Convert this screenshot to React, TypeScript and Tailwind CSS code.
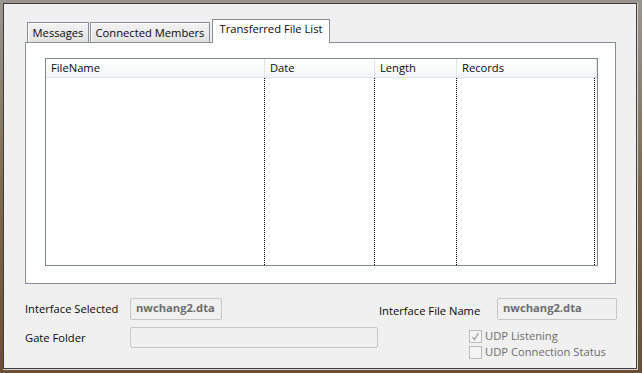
const columns = [
    { name: 'FileName', width: 'w-[219px]' },
    { name: 'Date', width: 'w-[110px]' },
    { name: 'Length', width: 'w-[82px]' },
    { name: 'Records', width: 'w-[139px]' },
];

function Tab({ label, active, width }: { label: string; active?: boolean; width: string }) {
    if (active) {
        return (
            <div
                className={`relative z-10 -mb-px flex h-[24px] ${width} items-start justify-center border border-b-0 border-[#898c95] bg-white pt-[3px]`}
            >
                {label}
            </div>
        );
    }
    return (
        <div
            className={`flex h-[20px] ${width} items-center justify-center border border-b-0 border-[#898c95] bg-gradient-to-b from-[#f3f3f3] to-[#e2e2e2] shadow-[inset_1px_1px_0_#fcfcfc]`}
        >
            {label}
        </div>
    );
}

function Checkbox({ label, checked }: { label: string; checked?: boolean }) {
    return (
        <div className="flex h-[16px] items-center gap-[3px]">
            <div className="flex h-[13px] w-[13px] items-center justify-center border border-[#bcbcbc] bg-[#f4f4f4]">
                {checked && (
                    <svg width="9" height="9" viewBox="0 0 9 9" fill="none">
                        <path d="M1.5 5 L3.5 7.5 L7.5 1" stroke="#a5a5a5" strokeWidth="1.4" />
                    </svg>
                )}
            </div>
            <span className="text-[#6d6d6d]">{label}</span>
        </div>
    );
}

export default function App() {
    return (
        <div
            className="h-[373px] w-[642px] bg-gradient-to-b from-[#9a968f] via-[#7e6a50] to-[#6a4f35] pl-[3px] pt-[3px] text-[11.2px] leading-none text-[#0a0a0a]"
            style={{ fontFamily: '"Open Sans", "Noto Sans", sans-serif' }}
        >
            <div className="h-[367px] w-[635px] border-b border-r border-[#d9d4cc]">
                <div className="h-[366px] w-[634px] border border-[#3d3d3d] bg-[#f0f0f0] pl-[21px] pt-[15px]">
                    {/* Tabs */}
                    <div className="flex items-end pl-[2px]">
                        <Tab label="Messages" width="w-[62px]" />
                        <div className="w-px" />
                        <Tab label="Connected Members" width="w-[120px]" />
                        <div className="w-[2px]" />
                        <Tab label="Transferred File List" width="w-[118px]" active />
                    </div>

                    {/* Tab panel */}
                    <div className="h-[242px] w-[591px] border border-[#898c95] bg-white pl-[19px] pt-[15px]">
                        <div className="flex h-[208px] w-[553px] flex-col border border-[#828790] bg-white">
                            <div className="flex h-[19px] border-b border-[#e3e4e6] bg-gradient-to-b from-white to-[#f5f6f7]">
                                {columns.map((col) => (
                                    <div
                                        key={col.name}
                                        className={`${col.width} flex items-center border-r border-[#e3e4e6] pl-[5px] last:flex-1`}
                                    >
                                        {col.name}
                                    </div>
                                ))}
                            </div>
                            <div className="flex flex-1">
                                {columns.map((col) => (
                                    <div
                                        key={col.name}
                                        className={`${col.width} border-r border-dotted border-black last:flex-none last:w-[138px]`}
                                    />
                                ))}
                            </div>
                        </div>
                    </div>

                    {/* Bottom fields */}
                    <div className="mt-[14px] flex w-[591px] items-center">
                        <div className="w-[105px]">Interface Selected</div>
                        <div className="flex h-[22px] w-[92px] items-center rounded-[2px] border border-[#c6c6c6] pb-[2px] pl-[5px] font-bold text-[#6d6d6d]">
                            nwchang2.dta
                        </div>
                        <div className="ml-auto w-[118px] pt-[3px]">Interface File Name</div>
                        <div className="mr-[-1px] flex h-[22px] w-[120px] items-center rounded-[2px] border border-[#c6c6c6] pb-[2px] pl-[5px] font-bold text-[#6d6d6d]">
                            nwchang2.dta
                        </div>
                    </div>
                    <div className="mt-[7px] flex items-start">
                        <div className="flex h-[21px] w-[105px] items-center">Gate Folder</div>
                        <div className="h-[21px] w-[248px] rounded-[2px] border border-[#c6c6c6]" />
                        <div className="ml-[91px] mt-[1px] flex flex-col">
                            <Checkbox label="UDP Listening" checked />
                            <Checkbox label="UDP Connection Status" />
                        </div>
                    </div>
                </div>
            </div>
        </div>
    );
}
